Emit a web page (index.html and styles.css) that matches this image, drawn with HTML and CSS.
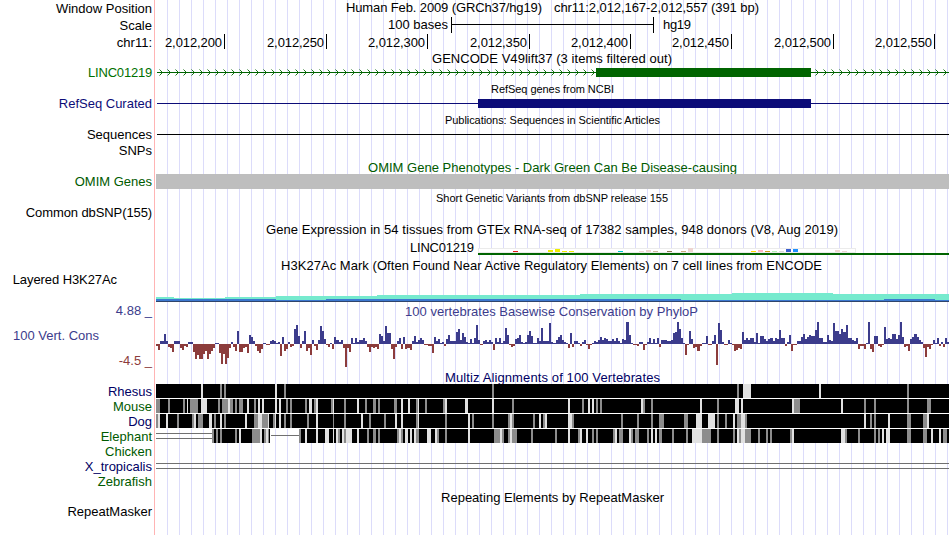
FILE: index.html
```
<!DOCTYPE html>
<html lang="en">
<head>
<meta charset="utf-8">
<title>Genome Browser</title>
<link rel="stylesheet" href="styles.css">
</head>
<body>
<main class="browser">
  <section class="track position">
    <div class="labels"><div>Window Position</div></div>
    <svg class="plot" viewBox="155 0 794 17"><text x="346" y="12" textLength="196">Human Feb. 2009 (GRCh37/hg19)</text><text x="554" y="12" textLength="205">chr11:2,012,167-2,012,557 (391 bp)</text></svg>
  </section>
  <section class="track scale">
    <div class="labels"><div>Scale</div></div>
    <svg class="plot" viewBox="155 17 794 17"><text x="388" y="29" textLength="60">100 bases</text><path class="rule" d="M451.5 17v16M653.5 17v16M451 24.500h203"/><text x="663" y="29" textLength="28">hg19</text></svg>
  </section>
  <section class="track ruler">
    <div class="labels"><div>chr11:</div></div>
    <svg class="plot" id="ruler" viewBox="155 34 794 16"></svg>
  </section>
  <section class="track gencode">
    <div class="labels"><div class="green tight">LINC01219</div></div>
    <svg class="plot" viewBox="155 50 794 31">
      <defs><pattern id="strand" x="159" y="69" width="8" height="7" patternUnits="userSpaceOnUse"><path class="chevron" d="M.5 .5L3.500 3.500L.5 6.500"/></pattern></defs>
      <text x="432" y="63" textLength="240">GENCODE V49lift37 (3 items filtered out)</text>
      <rect class="fill-gene" x="157" y="72" width="792" height="1"/>
      <rect fill="url(#strand)" x="159" y="69" width="790" height="7"/>
      <rect class="fill-gene" x="596" y="68" width="215" height="9"/>
      <rect class="fill-gene" x="811" y="72" width="4" height="1"/>
    </svg>
  </section>
  <section class="track refseq">
    <div class="labels"><div class="navy">RefSeq Curated</div></div>
    <svg class="plot" viewBox="155 81 794 31"><text class="small" x="491" y="93" textLength="123">RefSeq genes from NCBI</text><rect class="fill-refseq" x="157" y="103" width="792" height="1"/><rect class="fill-refseq" x="478" y="99" width="333" height="9"/></svg>
  </section>
  <section class="track pubs">
    <div class="labels"><div>Sequences</div></div>
    <svg class="plot" viewBox="155 112 794 31"><text class="small" x="445" y="124" textLength="215">Publications: Sequences in Scientific Articles</text><rect x="157" y="134" width="792" height="1"/></svg>
  </section>
  <section class="track snps">
    <div class="labels"><div>SNPs</div></div>
    <svg class="plot" viewBox="155 143 794 15"></svg>
  </section>
  <section class="track omim">
    <div class="labels"><div class="darkgreen">OMIM Genes</div></div>
    <svg class="plot" viewBox="155 158 794 32"><text class="darkgreen" x="368" y="172" textLength="369">OMIM Gene Phenotypes - Dark Green Can Be Disease-causing</text><rect class="fill-omim" x="156" y="174" width="793" height="15"/></svg>
  </section>
  <section class="track dbsnp">
    <div class="labels"><div class="snug">Common dbSNP(155)</div></div>
    <svg class="plot" viewBox="155 190 794 31"><text class="small" x="436" y="202" textLength="232">Short Genetic Variants from dbSNP release 155</text></svg>
  </section>
  <section class="track gtex">
    <div class="labels"></div>
    <svg class="plot" id="gtex" viewBox="155 221 794 36"><text x="266" y="234" textLength="572">Gene Expression in 54 tissues from GTEx RNA-seq of 17382 samples, 948 donors (V8, Aug 2019)</text><text x="410" y="252" textLength="64">LINC01219</text><rect class="expression-box" x="478.500" y="248.500" width="377" height="4"/><rect class="fill-gene" x="478" y="253" width="471" height="2"/></svg>
  </section>
  <section class="track h3k27ac">
    <div class="labels"><div class="layered">Layered H3K27Ac</div></div>
    <svg class="plot" viewBox="155 257 794 45">
      <text x="281" y="270" textLength="541">H3K27Ac Mark (Often Found Near Active Regulatory Elements) on 7 cell lines from ENCODE</text>
      <path fill="#76eace" d="M156 301V297H174V298H225V297H276V296H377V295H580V294H732V293H833V294H949V301Z"/>
      <path fill="#3c78d0" d="M156 301V299H276V300H326V299H681V300H884V299H935V300H949V301Z"/>
      <rect fill="#30456b" x="156" y="301" width="793" height="1"/>
    </svg>
  </section>
  <section class="track phylop">
    <div class="labels"><div class="violet limit">4.88 _</div><div class="violet name">100 Vert. Cons</div><div class="red limit">-4.5 _</div></div>
    <svg class="plot" id="phylop" viewBox="155 302 794 67"><text class="violet" x="405" y="316" textLength="293">100 vertebrates Basewise Conservation by PhyloP</text></svg>
  </section>
  <section class="track multiz">
    <div class="labels"><div class="deepblue">Rhesus</div><div class="darkgreen">Mouse</div><div class="deepblue">Dog</div><div class="darkgreen">Elephant</div><div class="darkgreen">Chicken</div><div class="deepblue">X_tropicalis</div><div class="darkgreen">Zebrafish</div></div>
    <svg class="plot" id="multiz" viewBox="155 369 794 119"><text class="deepblue" x="445" y="382" textLength="215">Multiz Alignments of 100 Vertebrates</text></svg>
  </section>
  <section class="track repeats">
    <div class="labels"><div>RepeatMasker</div></div>
    <svg class="plot" viewBox="155 488 794 47"><text x="441" y="502" textLength="223">Repeating Elements by RepeatMasker</text></svg>
  </section>
</main>
<script src="tracks.js"></script>
</body>
</html>
```
FILE: styles.css
```
body {
  margin: 0;
  background: #fff;
  color: #000;
  font: 13px/15px "Liberation Sans", Arial, sans-serif;
}

.browser {
  width: 949px;
  height: 535px;
  overflow: hidden;
}

.track {
  display: grid;
  grid-template-columns: 155px 794px;
  grid-template-rows: 100%;
}

.labels {
  box-sizing: border-box;
  min-height: 0;
  padding-right: 2px;
  border-right: 1px solid #ffb4b4;
  text-align: right;
  white-space: nowrap;
}

.plot {
  display: block;
  width: 794px;
  height: 100%;
  background: repeating-linear-gradient(to right, transparent 0 11px, #dcdcfa 11px 12px);
  background-position: 1px 0;
  shape-rendering: crispEdges;
}

.position { height: 17px; }
.scale { height: 17px; }
.ruler { height: 16px; }
.gencode, .refseq, .pubs, .dbsnp { height: 31px; }
.snps { height: 15px; }
.omim { height: 32px; }
.gtex { height: 36px; }
.h3k27ac { height: 45px; }
.phylop { height: 67px; }
.multiz { height: 119px; }
.repeats { height: 47px; }

.position .labels, .scale .labels, .ruler .labels, .phylop .labels { padding-top: 1px; }
.gencode .labels, .refseq .labels, .pubs .labels, .dbsnp .labels { padding-top: 15px; }
.multiz .labels { height: 119px; padding-top: 15px; }
.omim .labels, .repeats .labels { padding-top: 16px; }
.h3k27ac .labels { padding-top: 15px; }

.layered { padding-right: 35px; letter-spacing: -.08px; }
.tight { letter-spacing: -.2px; }
.snug { letter-spacing: -.1px; }
.phylop .name { margin: 10px 53px 10px 0; }
.phylop .limit { margin-right: 0; }

text { fill: currentColor; }
.small { font-size: 11px; }
.green { color: #007000; }
.darkgreen { color: #005a00; }
.navy { color: #0c0c78; }
.deepblue { color: #000064; }
.violet { color: #3c3c8c; }
.red { color: #8c3c3c; }

.rule { stroke: #000; fill: none; }
.chevron { stroke: #006400; fill: none; shape-rendering: auto; stroke-width: .9; }
.fill-gene { fill: #006400; }
.fill-refseq { fill: #0c0c78; }
.fill-omim { fill: #bebebe; }
.expression-box { fill: #fff; stroke: #ebebeb; }
```
FILE: tracks.js
```
const NS = "http://www.w3.org/2000/svg";

function add(parent, name, attrs, text) {
  const node = document.createElementNS(NS, name);
  for (const key in attrs) node.setAttribute(key, attrs[key]);
  if (text) node.textContent = text;
  parent.appendChild(node);
}

function bar(parent, x, y, width, height, fill) {
  add(parent, "rect", { x, y, width, height, fill });
}

// Coordinate ruler
const ruler = document.getElementById("ruler");
[224, 326, 427, 529, 630, 731, 833, 934].forEach((x, i) => {
  add(ruler, "text", { x: x - 59, y: 47, textLength: 57 }, "2,012," + (200 + i * 50));
  bar(ruler, x, 34, 1, 15, "#000");
});

// Tissue expression: x, height, colour
const gtex = document.getElementById("gtex");
[[513, 1, "#e01818"], [548, 2, "#eeee00"], [555, 3, "#eeee00"], [562, 1, "#eeee00"],
 [569, 1, "#eeee00"], [618, 1, "#00c5cd"], [639, 1, "#eed5d2"], [646, 2, "#eed5d2"],
 [653, 1, "#cdb79e"], [667, 1, "#8b7355"], [681, 1, "#cdaa7d"], [688, 4, "#eed5d2"],
 [751, 1, "#ffd700"], [758, 2, "#ffb6c1"], [765, 1, "#cd9b1d"], [772, 1, "#b4eeb4"],
 [779, 1, "#d9d9d9"], [786, 3, "#3a5fcd"], [793, 3, "#1e90ff"], [835, 2, "#eed5d2"],
 [842, 1, "#eed5d2"]].forEach(([x, h, c]) => bar(gtex, x, 252 - h, 5, h, c));

// Conservation scores: "offset:score,score,..." in thirds of a pixel from each origin
const scores = [
  [150, "18:1 21:-2 27:-6 30:-2 34:3,3 42:7 46:10 49:3 53:-2,-3,-4 69:-8 75:3,3,2 88:3 91:-2 96:-4 100:-6 104:-2 108:2 112:-3 118:2,2 128:-2 133:-8 136:-15 142:-11 148:-15,-15 157:-14 160:-10 166:1 168:-7 172:-15 177:-10 183:-7,-4 194:1,1 207:2 211:-9 214:-20 219:-10 222:-8 227:-20 232:-14 236:-11 241:-4 247:2 253:-3 259:-7 265:13 271:-8,-8 281:-4 284:1 290:-3 295:-9 301:9,7 311:3 316:-2,-4 327:-7 332:-9 336:-5 343:1 351:-1 361:3 367:4 372:3 379:1 384:2 391:-12 397:7 403:-7 409:-5 415:2 421:-3,-2 432:12 436:15 439:19 444:8 449:-2 455:-4 460:3 466:13 473:-7 478:-4 484:-11 490:4 496:-2 502:-6 508:4 514:18 518:13 523:5 528:2 533:-1 538:-3 544:1 550:-5 556:7 562:4 567:2 573:4 580:-4 586:-23 592:-4 598:-8 604:6 610:1 616:6 622:2 628:4,4 640:6 646:3 652:-3 658:-8 663:-3 670:-4,-3 684:-5 691:10 696:8 702:3 709:18 713:11 718:11 723:6 728:-5 733:-15 738:-3 746:3 751:6 758:-5 763:7 769:-5 775:-4 781:-6 787:3 793:8 798:2 803:-2"],
  [415, "0:3 4:-1 13:4 18:6 23:4 28:-1 40:-2 52:-9 58:7 64:3 70:5 75:1 80:-1 84:2 88:-2 97:5 102:9 108:3,3 121:3 126:12 132:15 136:4 141:4 145:11 150:7 156:2 162:1 169:5 175:1 181:6 187:19 193:4 199:-1 205:3 211:4 217:2 223:4 228:2 231:-2 236:-6 242:6 248:2 253:6 258:1 264:3 271:16 276:9 281:3 284:-1 290:-3 296:-2 301:5 307:6 312:6 317:9 322:2 328:1 334:2 340:9 346:13 351:8 357:1 364:1 370:6 375:3 381:16 387:3,3,3 406:21 412:2 418:1 424:4 430:7 435:9 441:4 448:2 454:1 460:-4 466:11 472:-3 479:3 485:3 491:1 497:-2 505:2 510:4 516:-1 521:-5 528:-1 534:1 540:3,2,4 558:7 564:4 570:6 576:5 582:3 588:3 595:5 601:3 608:6 614:3 620:1 626:5 631:4 637:22 643:9 648:1 656:-1 667:-2 678:2 685:-6 691:-1 697:2 703:6 709:1 715:5 721:1 727:6 734:-3 740:4,4,4 758:3,3 770:4 776:11 783:12 790:22 795:15"],
  [680, "0:5 6:6 12:1 19:-11 25:-1 31:13 36:5 43:-4 49:-3 55:-7 61:-2 71:1 77:5 82:5 79:8 88:-1 97:3 103:9 109:-21 116:21 121:14 127:2 133:-1 139:-1 145:4 151:1 157:-1 163:-7,-6 175:-4 185:-5 190:12 196:4 202:6,4 214:6,6 226:2 232:11 238:1 244:8,8 256:5 262:3 268:5,6 280:3 287:6 292:5 298:14 304:6,6 312:3 317:-2 323:2 328:9 335:-7 341:-1 347:-1 353:3,3 365:7 371:10 377:5 383:7 389:9,8 400:8 405:13 410:14 415:22 421:6,6 433:2,2 445:9 451:4 457:3 463:21 469:13,13 481:10 487:15 493:12 499:19 505:6,6 517:4,3 529:6 536:-5 542:-2 548:-2 554:-5 559:1 565:22 571:-5 577:-8 584:8,8 596:-2 604:-3 610:-1 616:17 622:5 628:6 634:5 640:10,10 651:5 657:9 663:22 669:7 675:-3 681:-2 688:-7 694:5 700:7 706:10 712:7 718:4 724:2 730:-4 736:-13 742:-3 748:-5 753:-1 760:4 766:1 772:6 778:-2 784:2 790:-3 796:6 802:2"]
];
const bases = new Array(391).fill(0);
scores.forEach(([origin, runs]) => runs.split(" ").forEach(run => {
  const [start, list] = run.split(":");
  list.split(",").forEach((value, k) => {
    const i = Math.floor((origin + (+start + 6 * k + 0.5) / 3 - 156) / 2.028);
    if (i >= 0 && i < 391 && Math.abs(value) > Math.abs(bases[i])) bases[i] = +value;
  });
}));
const phylop = document.getElementById("phylop");
bases.forEach((value, i) => {
  let v = value;
  if (!v) {
    const a = bases[i - 1] || 1, b = bases[i + 1] || 1;
    v = Math.abs(a) < Math.abs(b) ? a : b;
  }
  const x = Math.round(156 + i * 2.028);
  const w = Math.round(156 + (i + 1) * 2.028) - x;
  if (v > 0) bar(phylop, x, 344 - v, w, v, "#3c3c8c");
  else bar(phylop, x, 344, w, -v, "#8c3c3c");
});

// Alignment rows: g = mismatch, l = gap; offsets in thirds of a pixel
const G = "#8c8c8c", L = "#e1e1e1";
const rows = [
  { y: 384, from: 156, parts: [
    [150, "l153-159 g210-216 g222-228 l375-381 g402-408"],
    [415, "g231-237"],
    [680, "g171-177 l189-213 l417-423 g681-687"]] },
  { y: 399, from: 156, parts: [
    [150, "g18-30 g54-60 g99-105 l111-114 g120-144 l153-171 g204-210 g216-234 l234-240 g240-249 g255-261 g267-279 l291-297 g312-318 l324-330 l336-342 l375-381 l387-393 g408-414 g420-426 g465-471 l477-486 g492-498 l498-504 g543-549 l549-552 g582-588 l621-627 g645-651 g669-678 g684-690 g732-741 l753-759 l774-780 g798-804"],
    [415, "g3-9 l9-12 g30-36 g84-90 l90-96 l150-159 l231-237 g291-297 l459-465 g501-507 l519-525 l531-537 g543-549 g555-561 l678-684 g684-690 g708-714"],
    [680, "l60-66 g111-117 l165-177 l183-189 l336-342 g342-360 l483-489 g552-558 g582-588 g681-687 g741-753"]] },
  { y: 414, from: 156, parts: [
    [150, "g18-24 l24-30 l48-54 g81-87 g126-132 l132-138 g144-159 l177-186 g192-198 l210-216 g222-228 l285-291 g312-324 l324-336 g336-354 l354-357 g369-375 l375-378 l387-393 g402-408 g420-426 g471-477 l498-504 g549-552 g582-588 l633-639 g657-663 g702-708 l735-741 l753-759 g798-804"],
    [415, "g3-9 l9-12 g90-96 l159-165 g171-177 g231-237 g279-285 l285-291 g291-297 g354-360 l372-378 g384-390 l390-396 l459-471 g471-477 g618-624 g666-672 g708-714 g732-747"],
    [680, "g12-24 l48-66 l84-105 g111-117 g135-141 l159-165 g171-183 l183-195 g195-201 l552-558 g570-576 g582-588 l624-630 g681-693 g729-741 l741-747"]] },
  { y: 429, from: 212, parts: [
    [150, "g186-192 g198-204 g210-216 g255-261 l267-273 g306-330 l330-336 g342-348 l348-354 g354-357 g447-453 l465-471 l498-504 l525-537 l549-552 l558-564 g564-570 l576-582 g582-588 l588-606 l621-627 g651-657 g669-678 g684-690 g741-747 l747-753 g753-759 l765-774 l780-786 l792-798"],
    [415, "g3-12 l36-48 l60-66 g66-72 g90-96 l159-165 g237-255 l255-261 g261-267 g279-285 l285-291 g291-306 g348-354 g420-426 l459-465 g489-495 l495-501 l513-519 g531-537 g543-549 g594-600 l600-606 g612-624 l642-648 g648-654 g660-672 g696-702 l708-714 l720-726 g732-741 g771-777"],
    [680, "g18-24 l36-66 g66-93 g111-117 g159-165 l171-177 g177-183 l183-195 g195-213 g234-240 g258-264 g270-276 g330-336 l336-342 l483-495 g495-501 g534-540 g582-588 g594-600 l606-612 l618-630 g681-693 g729-741 l753-759 l777-783 g789-801"]] }
];
const multiz = document.getElementById("multiz");
rows.forEach(row => {
  if (row.from === 212) {
    bar(multiz, 212, row.y, 58, 14, "#000");
    bar(multiz, 299, row.y, 650, 14, "#000");
  } else {
    bar(multiz, 156, row.y, 793, 14, "#000");
  }
  bar(multiz, row.from, row.y + 14, 949 - row.from, row.y === 429 ? 0 : 1, "#fff");
  row.parts.forEach(([origin, list]) => list.split(" ").forEach(item => {
    const [a, b] = item.slice(1).split("-").map(Number);
    bar(multiz, origin + a / 3, row.y, (b - a) / 3, 14, item[0] === "g" ? G : L);
  }));
});

// Unaligned stretches
[[156, 433, 56], [156, 438, 56], [271, 435, 28], [156, 463, 793], [156, 468, 793]]
  .forEach(([x, y, w]) => bar(multiz, x, y, w, 1, "#707070"));
```
